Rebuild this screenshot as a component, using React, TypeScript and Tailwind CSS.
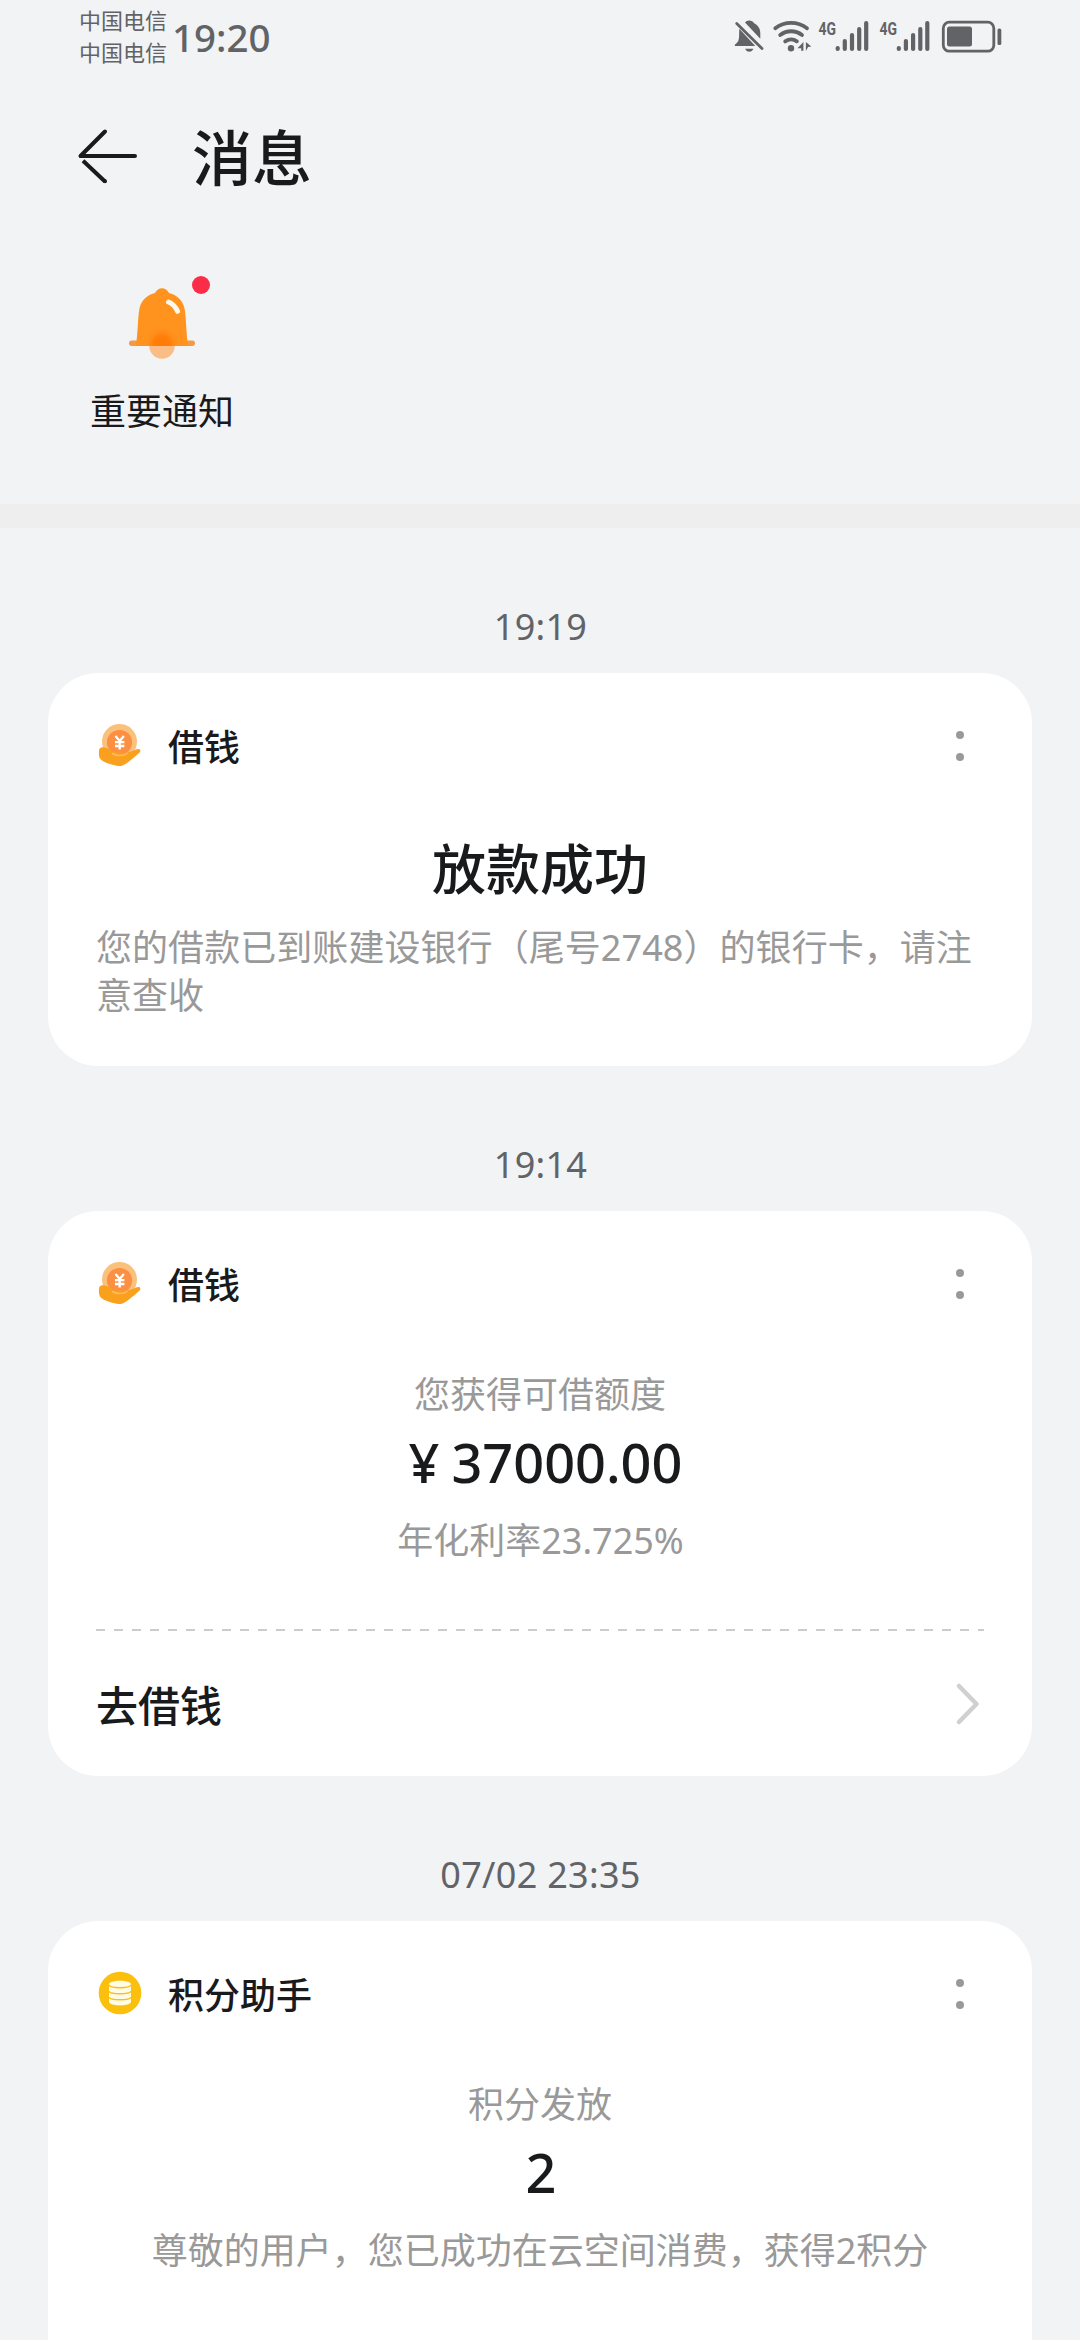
import type { ReactNode } from "react";

function StatusIcons() {
  return (
    <svg width="300" height="80" viewBox="0 0 300 80" className="text-[#626366]" fill="currentColor" aria-hidden="true">
      {/* muted bell */}
      <path d="M25 22.600c1-1.300 2.500-2 4.200-2 2.100 0 4 1 4.900 2.600 3.900 1.800 6.200 5.300 6.200 9.800v5.800Z" />
      <path d="M19.300 28.800 35.300 46H15c-.6-.8-.2-1.600.6-2.100 2.500-1.600 3.400-3.600 3.500-8.400Z" />
      <path d="M25.200 48.800h8.200c-.8 1.900-2.200 3-4.100 3s-3.300-1.100-4.100-3Z" />
      <path d="M16.700 23.500 42 48.400" stroke="currentColor" strokeWidth="2.800" strokeLinecap="round" fill="none" />
      {/* wifi */}
      <g fill="none" stroke="currentColor" strokeWidth="3.800" strokeLinecap="round">
        <path d="M55.300 28.300c9.200-7.300 22.400-7.300 31.700 0" />
        <path d="M60.200 35c6.600-5 15.200-5 21.800 0" />
        <path d="M65.200 41.400c3.700-2.500 8.100-2.500 11.700-.1" />
      </g>
      <circle cx="71" cy="48.200" r="3.200" />
      <path d="M83.400 42v8.800h-2.200v-2.600H77.500Zm2.500 0 5.400 4.600-3.200.4-2.200 3.900Z" />
      {/* signal strength */}
      <g stroke="currentColor" strokeWidth="4.200" strokeLinecap="round">
        <path d="M117.700 48v1M124.800 41v8M132 35v14M139.200 29v20M146.200 23v26" />
        <path d="M178.800 48v1M185.900 41v8M193.100 35v14M200.300 29v20M207.300 23v26" />
      </g>
      <g fontFamily="Roboto, sans-serif" fontWeight="700" fontSize="19">
        <text x="98.500" y="34.500" textLength="17.500" lengthAdjust="spacingAndGlyphs">4G</text>
        <text x="159.500" y="34.500" textLength="17.500" lengthAdjust="spacingAndGlyphs">4G</text>
      </g>
      {/* battery */}
      <rect x="223.300" y="22.200" width="50.500" height="29" rx="6" fill="none" stroke="currentColor" strokeWidth="2.800" />
      <rect x="227" y="26.500" width="25" height="20" rx="2.500" />
      <rect x="277.500" y="28.500" width="3.800" height="16.500" rx="1.600" />
    </svg>
  );
}

function BackArrow() {
  return (
    <svg width="60" height="56" viewBox="0 0 60 56" fill="none" stroke="#191a1c" strokeWidth="4" strokeLinecap="round" aria-hidden="true">
      <path d="M28 3.500 3.500 28H58" strokeLinejoin="round" />
      <path d="M6 32.800 28 53.500" strokeLinecap="butt" />
      <circle cx="28" cy="53.200" r="2" fill="#191a1c" stroke="none" />
    </svg>
  );
}

function NoticeBell() {
  return (
    <svg width="68" height="74" viewBox="0 0 68 74" aria-hidden="true">
      <defs>
        <radialGradient id="glow">
          <stop offset="0" stopColor="#ff7a00" />
          <stop offset="0.450" stopColor="#ff7f0a" />
          <stop offset="1" stopColor="#ff931e" stopOpacity="0" />
        </radialGradient>
        <clipPath id="body">
          <rect x="8" y="0" width="52" height="60" />
        </clipPath>
      </defs>
      <circle cx="34" cy="60" r="12.700" fill="#fabd85" />
      <rect x="1" y="54.500" width="66" height="5.500" rx="2.700" fill="#f39a48" />
      <path d="M7.800 60C10 48 9.700 31 11.500 22.500 13.300 13.500 20.300 8.700 27 7c3-6.500 11-6.500 14 0 6.700 1.700 13.700 6.500 15.500 15.500C58.300 31 58 48 60.200 60Z" fill="#ff931e" />
      <g clipPath="url(#body)">
        <circle cx="34" cy="58" r="18" fill="url(#glow)" />
      </g>
      <path d="M40.500 16c4.200 1.800 7.200 5 9 9.300" fill="none" stroke="#fff8ee" strokeWidth="5" strokeLinecap="round" />
    </svg>
  );
}

function LoanIcon() {
  return (
    <svg width="44" height="44" viewBox="0 0 44 44" className="-mt-[2px]" aria-hidden="true">
      <circle cx="21.500" cy="18.500" r="17.500" fill="#fac17d" />
      <circle cx="21.500" cy="19.500" r="12.600" fill="#fb8f42" />
      <path d="M1 28c0-3.600 3-4.200 6.500-3.300 4.500.8 6.500 4.300 12 4.800 4 .4 7.500.5 11-.3 4-.9 7-2.800 9.500-3.300 2.300-.2 3.200 1.800 1.600 3.500C37.500 33.300 30.500 39 26.500 41.500c-3 1.800-6.500 1.900-10 .8C10 40.500 4.500 39 2 35.500.8 33.500.9 30.500 1 28Z" fill="#f9a01f" />
      <path d="M14.500 30.500c4.500 2.800 10.500 2.800 14.500 0" fill="none" stroke="#fdbb62" strokeWidth="1.500" strokeLinecap="round" />
      <path d="M17.500 13l4.200 5 4.200-5M21.700 18v8.500M17 19.200h9.400M17 23h9.400" fill="none" stroke="#fff" strokeWidth="2.300" />
    </svg>
  );
}

function PointsIcon() {
  return (
    <svg width="44" height="44" viewBox="0 0 44 44" className="-mt-[2px]" aria-hidden="true">
      <circle cx="22" cy="22" r="21.300" fill="#fac00d" />
      <path d="M11 13.500c0-5 22-5 22 0v17.300c0 4.800-22 4.800-22 0Z" fill="#fffbe6" />
      <g fill="none" stroke="#fac00d" strokeWidth="1.500">
        <path d="M11 14c1.500 3.500 20.500 3.500 22 0M11 20.300c1.500 3.300 20.500 3.300 22 0M11 26.300c1.500 3.300 20.500 3.300 22 0" />
      </g>
    </svg>
  );
}

function MoreDots() {
  return (
    <button className="mr-[68px] flex h-[30px] w-2 flex-col items-center justify-between" aria-label="更多">
      <span className="h-2 w-2 rounded-full bg-[#999999]" />
      <span className="h-2 w-2 rounded-full bg-[#999999]" />
    </button>
  );
}

function MessageCard({ time, title, icon, className, children }: { time: string; title: string; icon: ReactNode; className: string; children: ReactNode }) {
  return (
    <section>
      <time className="block h-[145px] pt-[75px] pl-px text-center text-[36px] leading-[48px] tracking-[0.3px] text-[#626366]">{time}</time>
      <article className={`mx-12 rounded-[50px] bg-white ${className}`}>
        <header className="flex h-[146px] items-center pl-[50px]">
          {icon}
          <h2 className="ml-[26px] flex-1 pt-1 text-[36px] leading-[48px] font-medium">{title}</h2>
          <MoreDots />
        </header>
        {children}
      </article>
    </section>
  );
}

export default function App() {
  return (
    <main className="h-[2340px] w-[1080px] overflow-hidden bg-[#f1f3f5] font-['Noto_Sans','Noto_Sans_CJK_SC',sans-serif] text-[#191a1c]">
      <div className="flex h-20 items-start pl-[79px] text-[#626366]">
        <div className="w-[93px] pt-1 text-[22px] leading-8">
          <div>中国电信</div>
          <div>中国电信</div>
        </div>
        <div className="w-[548px] pt-3 text-[38.500px] leading-[50px] font-medium">19:20</div>
        <StatusIcons />
      </div>

      <header className="flex h-[152px] items-start pl-[77px]">
        <div className="pt-12">
          <BackArrow />
        </div>
        <h1 className="ml-[55px] pt-[38px] text-[60px] leading-[80px] font-medium">消息</h1>
      </header>

      <section className="h-[272px] pl-[90px]">
        <div className="relative flex w-36 flex-col items-center pt-[54px]">
          <NoticeBell />
          <span className="absolute top-[44px] left-[102px] h-[18px] w-[18px] rounded-full bg-[#fa2c47]" />
          <p className="mt-[28px] text-[36px] leading-[48px]">重要通知</p>
        </div>
      </section>
      <div className="h-6 bg-[#eeeeee]" />

      <MessageCard time="19:19" title="借钱" icon={<LoanIcon />} className="h-[393px]">
        <h3 className="pt-[14px] text-center text-[54px] leading-[72px] font-medium">放款成功</h3>
        <p className="mt-[19px] px-12 text-[36px] leading-[48px] tracking-[0.06px] text-[#999999]">
          您的借款已到账建设银行（尾号2748）的银行卡，请注意查收
        </p>
      </MessageCard>

      <MessageCard time="19:14" title="借钱" icon={<LoanIcon />} className="h-[565px]">
        <p className="pt-[14px] text-center text-[36px] leading-[48px] text-[#999999]">您获得可借额度</p>
        <p className="mt-[7px] pl-[11px] text-center text-[54px] leading-[72px] font-medium">
          <span className="mr-[12px]">¥</span>37000.00
        </p>
        <p className="mt-[19px] pl-px text-center text-[36px] leading-[48px] text-[#999999]">年化利率23.725%</p>
        <div className="mx-12 mt-[64px] h-[2px] bg-[repeating-linear-gradient(to_right,#cccccc_0_9px,transparent_9px_18px)]" />
        <div className="flex h-[146px] items-center justify-between pr-[52px] pl-12">
          <span className="pt-[3px] text-[42px] leading-[56px] font-medium">去借钱</span>
          <svg width="24" height="42" viewBox="0 0 24 42" fill="none" stroke="#d0d0d0" strokeWidth="4.500" strokeLinecap="round" strokeLinejoin="round" aria-hidden="true">
            <path d="M3 3 20.500 21 3 39" />
          </svg>
        </div>
      </MessageCard>

      <MessageCard time="07/02 23:35" title="积分助手" icon={<PointsIcon />} className="h-[500px]">
        <p className="pt-[14px] text-center text-[36px] leading-[48px] text-[#999999]">积分发放</p>
        <p className="mt-[7px] pl-[2px] text-center text-[54px] leading-[72px] font-medium">2</p>
        <p className="mt-[19px] text-center text-[36px] leading-[48px] text-[#999999]">
          尊敬的用户，您已成功在云空间消费，获得2积分
        </p>
      </MessageCard>
    </main>
  );
}
